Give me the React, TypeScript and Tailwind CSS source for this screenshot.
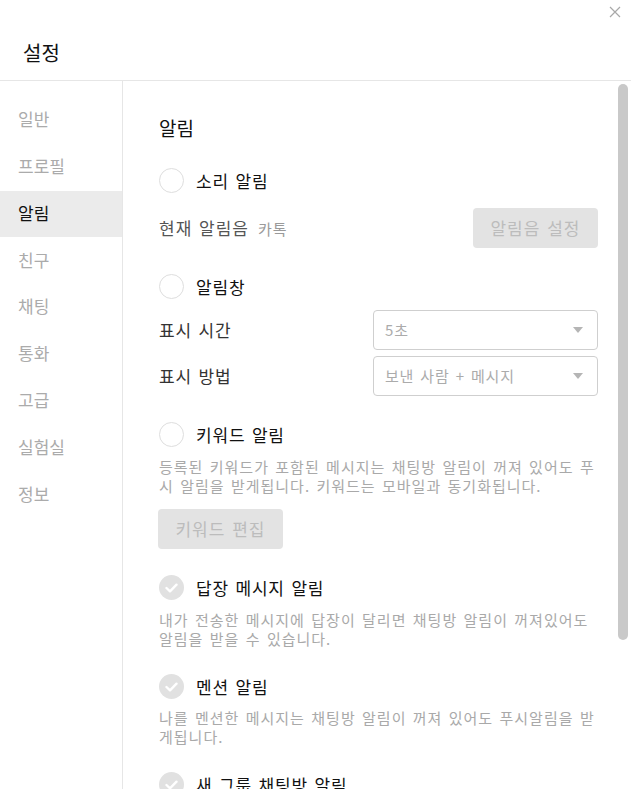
import React from "react";

const font = "font-['Noto_Sans_CJK_KR',_'Noto_Sans',_sans-serif]";

function Radio() {
  return <div className="w-[25px] h-[25px] rounded-full border-[1.5px] border-[#dedede] bg-white shrink-0" />;
}

function Check() {
  return (
    <div className="w-[25px] h-[25px] rounded-full bg-[#e1e1e1] shrink-0 flex items-center justify-center">
      <svg width="13" height="10" viewBox="0 0 13 10" fill="none">
        <path d="M1.5 5 L5 8.3 L11.5 1.7" stroke="#ffffff" strokeWidth="2.4" strokeLinecap="round" strokeLinejoin="round" />
      </svg>
    </div>
  );
}

function Arrow() {
  return (
    <svg width="10" height="6" viewBox="0 0 10 6">
      <path d="M0 0 L10 0 L5 6 Z" fill="#b5b5b5" />
    </svg>
  );
}

export default function App() {
  const nav = ["일반", "프로필", "알림", "친구", "채팅", "통화", "고급", "실험실", "정보"];
  return (
    <div className={`relative w-[631px] h-[789px] overflow-hidden bg-white ${font} [word-spacing:2px]`}>
      <div className="h-[81px] border-b border-[#e6e6e6] pl-[23px] pt-[40px]">
        <div className="text-[20px] leading-[26px] text-[#111]">설정</div>
      </div>
      <div className="absolute right-[10px] top-[6px]">
        <svg width="12" height="12" viewBox="0 0 12 12">
          <path d="M1 1 L11 11 M11 1 L1 11" stroke="#a8a8a8" strokeWidth="1.2" />
        </svg>
      </div>
      <div className="flex h-[708px]">
        <div className="w-[123px] border-r border-[#e6e6e6] pt-[16px] shrink-0">
          {nav.map((n) => (
            <div
              key={n}
              className={`h-[46.8px] flex items-center pl-[18px] pb-[3px] text-[17px] ${
                n === "알림" ? "bg-[#ebebeb] text-[#111]" : "text-[#ababab]"
              }`}
            >
              {n}
            </div>
          ))}
        </div>
        <div className="relative flex-1 pl-[36px] pr-[33px] pt-[35px]">
          <div className="text-[19px] leading-[24px] text-[#111]">알림</div>

          <div className="mt-[28px] flex items-center gap-[12px] h-[25px]">
            <Radio />
            <span className="text-[17px] tracking-[0.8px] text-[#111]">소리 알림</span>
          </div>

          <div className="mt-[15px] flex items-center justify-between h-[40px]">
            <div className="flex items-baseline gap-[9px]">
              <span className="text-[17px] tracking-[1px] text-[#555]">현재 알림음</span>
              <span className="text-[15px] tracking-[1px] text-[#9a9a9a]">카톡</span>
            </div>
            <div className="w-[125px] h-[40px] rounded-[4px] bg-[#e3e3e3] flex items-center justify-center text-[17px] tracking-[1px] text-[#bcbcbc]">
              알림음 설정
            </div>
          </div>

          <div className="mt-[26px] flex items-center gap-[12px] h-[25px]">
            <Radio />
            <span className="text-[17px] tracking-[0.8px] text-[#111]">알림창</span>
          </div>

          <div className="mt-[11px] flex items-center justify-between h-[40px]">
            <span className="text-[17px] tracking-[0.8px] text-[#333]">표시 시간</span>
            <div className="w-[225px] h-[40px] rounded-[4px] border border-[#cfcfcf] flex items-center justify-between pl-[11px] pr-[14px] text-[15px] tracking-[0.8px] text-[#ababab]">
              <span>5초</span>
              <Arrow />
            </div>
          </div>
          <div className="mt-[6px] flex items-center justify-between h-[40px]">
            <span className="text-[17px] tracking-[0.8px] text-[#333]">표시 방법</span>
            <div className="w-[225px] h-[40px] rounded-[4px] border border-[#cfcfcf] flex items-center justify-between pl-[11px] pr-[14px] text-[15px] tracking-[0.8px] text-[#ababab]">
              <span>보낸 사람 + 메시지</span>
              <Arrow />
            </div>
          </div>

          <div className="mt-[26px] flex items-center gap-[12px] h-[25px]">
            <Radio />
            <span className="text-[17px] tracking-[0.8px] text-[#111]">키워드 알림</span>
          </div>
          <p className="mt-[10px] text-[15px] leading-[19px] tracking-[1px] text-[#a9a9a9]">
            등록된 키워드가 포함된 메시지는 채팅방 알림이 꺼져 있어도 푸시 알림을 받게됩니다. 키워드는 모바일과 동기화됩니다.
          </p>
          <div className="mt-[14px] w-[125px] h-[40px] rounded-[4px] bg-[#e3e3e3] flex items-center justify-center text-[17px] tracking-[1px] text-[#bcbcbc] -ml-px">
            키워드 편집
          </div>

          <div className="mt-[26px] flex items-center gap-[12px] h-[25px]">
            <Check />
            <span className="text-[17px] tracking-[0.8px] text-[#111]">답장 메시지 알림</span>
          </div>
          <p className="mt-[10px] text-[15px] leading-[19px] tracking-[1px] text-[#a9a9a9]">
            내가 전송한 메시지에 답장이 달리면 채팅방 알림이 꺼져있어도 알림을 받을 수 있습니다.
          </p>

          <div className="mt-[26px] flex items-center gap-[12px] h-[25px]">
            <Check />
            <span className="text-[17px] tracking-[0.8px] text-[#111]">멘션 알림</span>
          </div>
          <p className="mt-[9px] text-[15px] leading-[19px] tracking-[1px] text-[#a9a9a9]">
            나를 멘션한 메시지는 채팅방 알림이 꺼져 있어도 푸시알림을 받게됩니다.
          </p>

          <div className="mt-[26px] flex items-center gap-[12px] h-[25px]">
            <Check />
            <span className="text-[17px] tracking-[0.8px] text-[#111]">새 그룹 채팅방 알림</span>
          </div>

          <div className="absolute right-[3px] top-[3px] w-[10px] h-[556px] rounded-full bg-[#c9c9c9]" />
        </div>
      </div>
    </div>
  );
}
